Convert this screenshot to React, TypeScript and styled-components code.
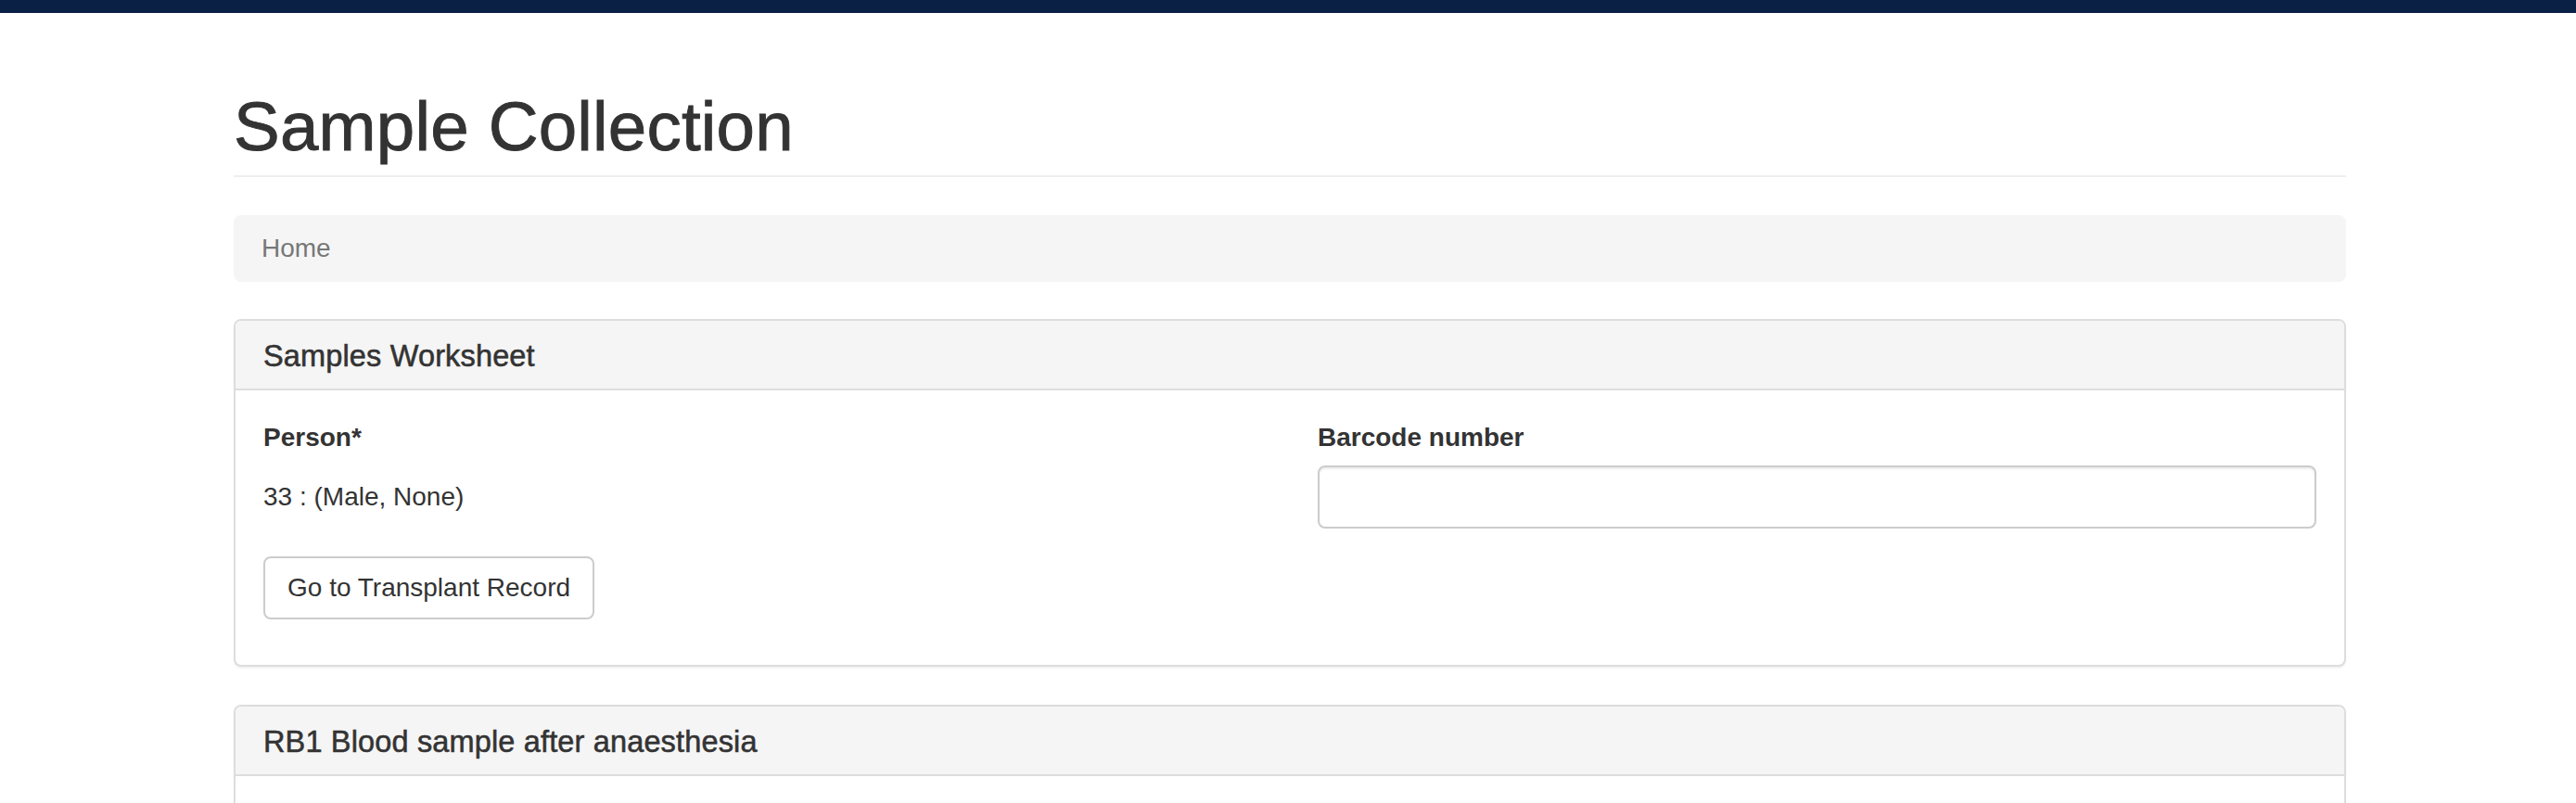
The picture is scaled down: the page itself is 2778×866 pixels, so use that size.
import React from "react";
import styled, { createGlobalStyle } from "styled-components";

const GlobalStyle = createGlobalStyle`
  html, body {
    margin: 0;
    padding: 0;
    background: #ffffff;
  }
  body {
    font-family: "Liberation Sans", Helvetica, Arial, sans-serif;
    font-size: 28px;
    line-height: 40px;
    color: #333333;
  }
  * { box-sizing: border-box; }
`;

const TopBar = styled.div`
  height: 14px;
  background: #0a2044;
`;

const Container = styled.div`
  width: 2278px;
  margin: 0 0 0 252px;
`;

const PageHeader = styled.div`
  margin-top: 82px;
  padding-bottom: 12px;
  border-bottom: 2px solid #eeeeee;
`;

const Title = styled.h1`
  margin: 0;
  font-size: 74.5px;
  line-height: 81px;
  font-weight: 500;
  color: #333333;
  -webkit-text-stroke: 0.9px #333333;
  letter-spacing: 0.2px;
`;

const Breadcrumb = styled.ol`
  list-style: none;
  margin: 41px 0 40px;
  padding: 16px 30px;
  background: #f5f5f5;
  border-radius: 8px;
  height: 72px;
`;

const Crumb = styled.li`
  display: inline-block;
  color: #777777;
  font-size: 28px;
  line-height: 40px;
`;

const Panel = styled.section`
  border: 2px solid #dddddd;
  border-radius: 8px;
  background: #ffffff;
  box-shadow: 0 2px 2px rgba(0, 0, 0, 0.05);
  margin-bottom: 41px;
`;

const PanelHeading = styled.div`
  background: #f5f5f5;
  border-bottom: 2px solid #dddddd;
  border-radius: 6px 6px 0 0;
  padding: 21px 30px 17px;
`;

const PanelTitle = styled.h3`
  margin: 0;
  font-size: 32.5px;
  line-height: 35px;
  font-weight: 500;
  color: #333333;
  -webkit-text-stroke: 0.55px #333333;
  letter-spacing: 0.15px;
`;

const PanelBody = styled.div<{ $minHeight?: number }>`
  padding: 31px 30px 29px;
  min-height: ${(p) => (p.$minHeight ? `${p.$minHeight}px` : "auto")};
`;

const Row = styled.div`
  display: grid;
  grid-template-columns: 1fr 1fr;
  column-gap: 60px;
`;

const Column = styled.div`
  display: flex;
  flex-direction: column;
  align-items: flex-start;
`;

const FormGroup = styled.div`
  display: flex;
  flex-direction: column;
  align-items: stretch;
  align-self: stretch;
  margin-bottom: 30px;
`;

const Label = styled.label`
  display: block;
  font-weight: 700;
  font-size: 28px;
  line-height: 40px;
  margin-bottom: 10px;
`;

const StaticText = styled.p`
  margin: 0;
  padding: 14px 0;
  min-height: 68px;
  font-size: 28px;
  line-height: 40px;
`;

const TextInput = styled.input`
  display: block;
  width: 100%;
  height: 68px;
  padding: 12px 24px;
  font-family: inherit;
  font-size: 28px;
  line-height: 40px;
  color: #555555;
  background: #ffffff;
  border: 2px solid #cccccc;
  border-radius: 8px;
  box-shadow: inset 0 2px 2px rgba(0, 0, 0, 0.075);
  outline: none;
`;

const ButtonWrap = styled.p`
  margin: 0 0 20px;
`;

const Button = styled.button`
  display: inline-block;
  height: 68px;
  padding: 12px 24px;
  font-family: inherit;
  font-size: 28px;
  line-height: 40px;
  color: #333333;
  background: #ffffff;
  border: 2px solid #cccccc;
  border-radius: 8px;
  cursor: pointer;
`;

export default function App() {
  return (
    <>
      <GlobalStyle />
      <TopBar />
      <Container>
        <PageHeader>
          <Title>Sample Collection</Title>
        </PageHeader>
        <Breadcrumb>
          <Crumb>Home</Crumb>
        </Breadcrumb>

        <Panel>
          <PanelHeading>
            <PanelTitle>Samples Worksheet</PanelTitle>
          </PanelHeading>
          <PanelBody>
            <Row>
              <Column>
                <FormGroup>
                  <Label>Person*</Label>
                  <StaticText>33 : (Male, None)</StaticText>
                </FormGroup>
                <ButtonWrap>
                  <Button type="button">Go to Transplant Record</Button>
                </ButtonWrap>
              </Column>
              <Column>
                <FormGroup>
                  <Label htmlFor="barcode">Barcode number</Label>
                  <TextInput id="barcode" type="text" />
                </FormGroup>
              </Column>
            </Row>
          </PanelBody>
        </Panel>

        <Panel>
          <PanelHeading>
            <PanelTitle>RB1 Blood sample after anaesthesia</PanelTitle>
          </PanelHeading>
          <PanelBody $minHeight={240} />
        </Panel>
      </Container>
    </>
  );
}
